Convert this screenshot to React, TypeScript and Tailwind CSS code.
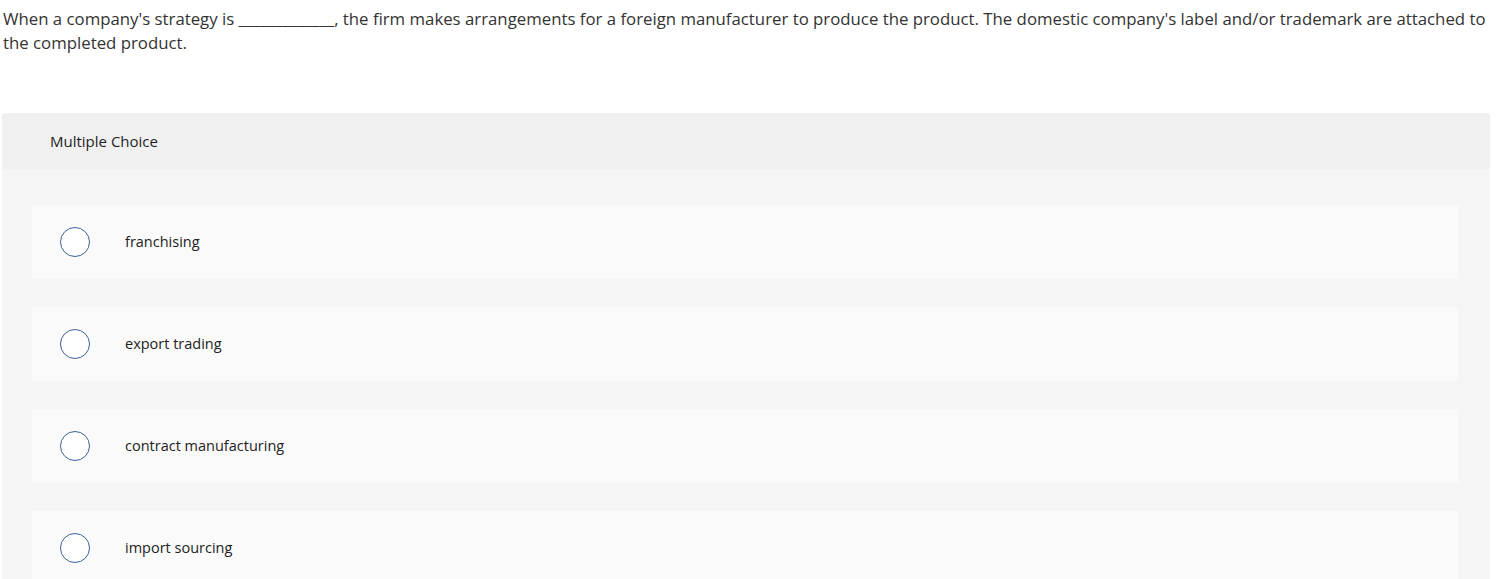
import React from "react";

const options = ["franchising", "export trading", "contract manufacturing", "import sourcing"];

function Radio() {
  return <span className="block w-[30px] h-[30px] shrink-0 rounded-full border-[1.5px] border-[#3d6293] bg-white" />;
}

export default function App() {
  return (
    <div className="min-h-screen bg-white text-[#333] font-['Open_Sans','Liberation_Sans',sans-serif]">
      <p className="pl-[3px] pt-[7px] text-[16.8px] leading-[24px] text-[#333]">
        When a company's strategy is _____________, the firm makes arrangements for a foreign manufacturer to produce the product. The
        domestic company's label and/or trademark are attached to the completed product.
      </p>
      <div className="mt-[58px] ml-[2px] w-[1488px] rounded-t-[3px] overflow-hidden">
        <div className="h-[56px] bg-[#f0f0f0] flex items-center pl-[48px] text-[15px] text-[#1f1f1f]">Multiple Choice</div>
        <div className="bg-[#f5f5f5] pt-[36px] pl-[30px] pr-[32px] flex flex-col gap-[28px]">
          {options.map((o) => (
            <div key={o} className="h-[74px] rounded-[3px] bg-[#fafafa] flex items-center pl-[28px]">
              <Radio />
              <span className="ml-[35px] text-[14.5px] text-[#222]">{o}</span>
            </div>
          ))}
        </div>
      </div>
    </div>
  );
}
